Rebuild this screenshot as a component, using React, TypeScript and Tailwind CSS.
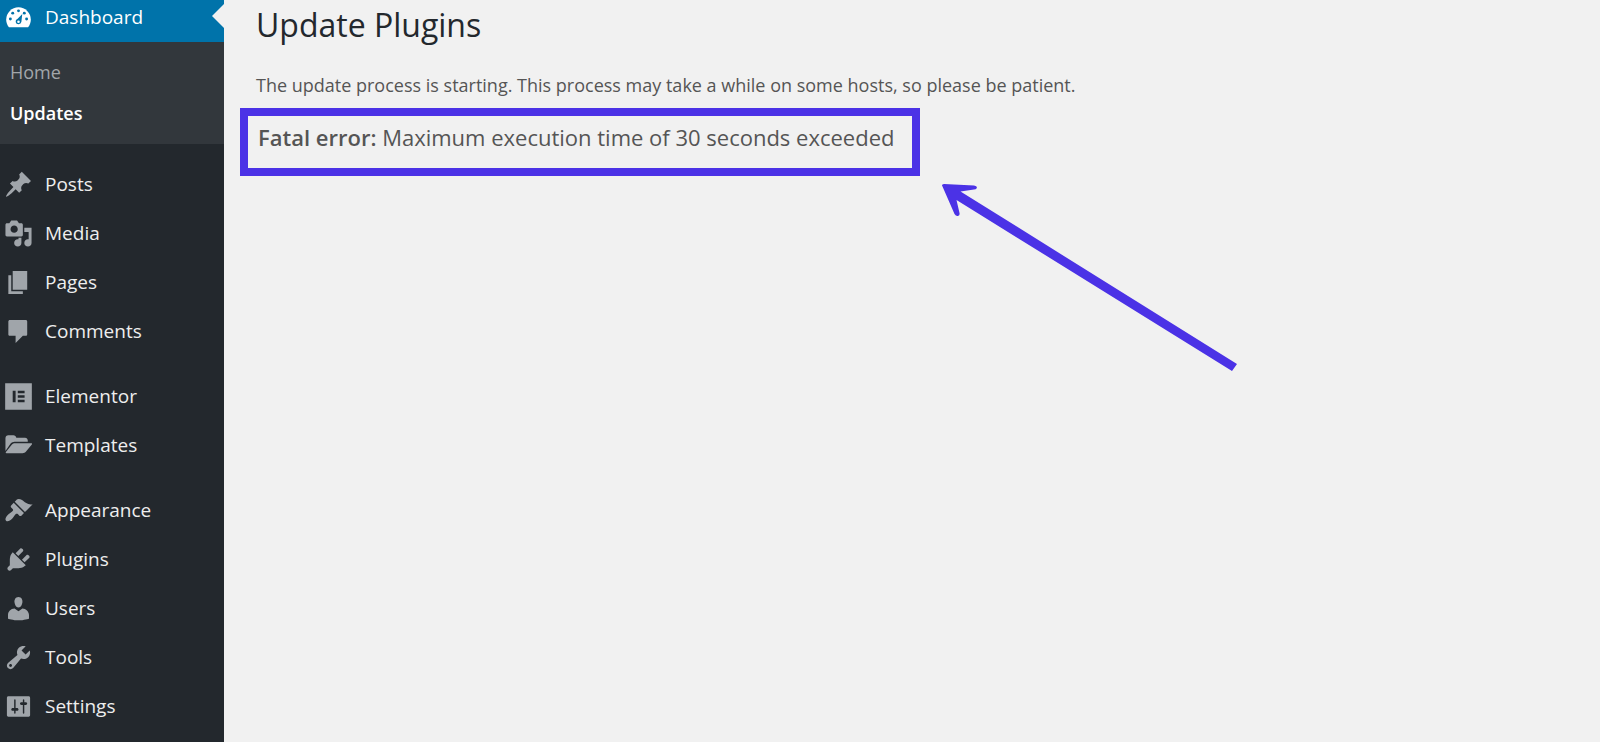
import type { ReactNode } from "react";

const Icon = ({ children }: { children: ReactNode }) => (
  <svg viewBox="0 0 20 20" className="size-[29px] flex-none" fill="currentColor" fillRule="evenodd" aria-hidden="true">
    {children}
  </svg>
);

const icons = {
  posts: (
    <path d="M10.44 3.02l1.82-1.82 6.36 6.35-1.83 1.82c-1.05-.68-2.48-.57-3.41.36l-.75.75c-.92.93-1.04 2.35-.35 3.41l-1.83 1.82-2.41-2.41-2.8 2.79c-.42.42-3.38 2.71-3.8 2.29s1.86-3.39 2.28-3.81l2.79-2.79L4.1 9.36l1.83-1.82c1.05.69 2.48.57 3.4-.36l.75-.75c.93-.92 1.05-2.35.36-3.41z" />
  ),
  media: (
    <path d="M13 11V4c0-.55-.45-1-1-1h-1.67L9 1H5L3.67 3H2c-.55 0-1 .45-1 1v7c0 .55.45 1 1 1h10c.55 0 1-.45 1-1zM7 4.5c1.38 0 2.5 1.12 2.5 2.5S8.38 9.5 7 9.5 4.5 8.38 4.5 7 5.62 4.5 7 4.5zM14 6h5v10.5c0 1.38-1.12 2.5-2.5 2.5S14 17.88 14 16.5s1.12-2.5 2.5-2.5c.17 0 .34.02.5.05V9h-3V6zm-4 8.05V13h2v3.5c0 1.38-1.12 2.5-2.5 2.5S7 17.88 7 16.5 8.12 14 9.5 14c.17 0 .34.02.5.05z" />
  ),
  pages: <path d="M6 15V2h10v13H6zm-1 1h8v2H3V5h2v11z" />,
  comments: (
    <path d="M4 2h11c.55 0 1 .45 1 1v9c0 .55-.45 1-1 1h-2l-5 5v-5H4c-.55 0-1-.45-1-1V3c0-.55.45-1 1-1z" />
  ),
  elementor: <path d="M.8.8h18.4v18.4H.8zM6 6v8h2V6zM9.5 6v1.7h4.7V6zM9.5 9.15v1.7h4.7v-1.7zM9.5 12.3V14h4.7v-1.7z" />,
  templates: (
    <path d="M1 13.8V5c0-1.2.8-2 2-2h3.5c1 0 1.8.7 2 1.7h6c1.1 0 1.9.8 1.9 1.9v.8H7.3c-1 0-2 .5-2.7 1.3L1 13.8zM7.4 8.5h11.4c.5 0 .7.4.4.8l-4 4.9c-.6.7-1.5 1.1-2.4 1.1H1.7c-.5 0-.7-.4-.4-.8L5.2 9.6c.6-.7 1.4-1.1 2.2-1.1z" />
  ),
  appearance: (
    <path d="M14.48 11.06L7.41 3.99l1.5-1.5c.5-.56 2.3-.47 3.51.32 1.21.8 1.43 1.28 2.91 2.1 1.18.64 2.45 1.26 4.45.85zm-.71.71L6.7 4.7 4.93 6.47c-.39.39-.39 1.02 0 1.41l1.06 1.06c.39.39.39 1.03 0 1.42-.6.6-1.43 1.11-2.21 1.69-.35.26-.7.53-1.01.84C1.43 14.23.4 16.08 1.4 17.07c.99 1 2.84-.03 4.18-1.36.31-.31.58-.66.85-1.02.57-.78 1.08-1.61 1.69-2.21.39-.39 1.02-.39 1.41 0l1.06 1.06c.39.39 1.02.39 1.41 0z" />
  ),
  plugins: (
    <path d="M13.11 4.36L9.87 7.6 8 5.73l3.24-3.24c.35-.34 1.05-.2 1.56.32.52.51.66 1.21.31 1.55zm-8 1.77l.91-1.12 9.01 9.01-1.19.84c-.71.71-2.63 1.16-3.82 1.16H6.14L4.9 17.26c-.59.59-1.54.59-2.12 0-.59-.58-.59-1.53 0-2.12l1.24-1.24v-3.88c0-1.13.4-3.19 1.09-3.89zm7.26 3.97l3.24-3.24c.34-.35 1.04-.21 1.55.31.52.51.66 1.21.31 1.55l-3.24 3.25z" />
  ),
  users: (
    <path d="M10 9.25c-2.27 0-2.73-3.44-2.73-3.44C7 4.02 7.82 2 9.97 2c2.16 0 2.98 2.02 2.71 3.81 0 0-.41 3.44-2.68 3.44zm0 2.57L12.72 10c2.39 0 4.52 2.33 4.52 4.53v2.49s-3.65 1.13-7.24 1.13c-3.65 0-7.24-1.13-7.24-1.13v-2.49c0-2.25 1.94-4.48 4.47-4.48z" />
  ),
  tools: (
    <path d="M16.68 9.77c-1.34 1.34-3.3 1.67-4.95.99l-5.41 6.52c-.99.99-2.59.99-3.58 0s-.99-2.59 0-3.57l6.52-5.42c-.68-1.65-.35-3.61.99-4.95 1.28-1.28 3.12-1.62 4.72-1.06l-2.89 2.89 2.82 2.82 2.86-2.87c.53 1.58.18 3.39-1.08 4.65zM3.81 16.21c.4.39 1.04.39 1.43 0 .4-.4.4-1.04 0-1.43-.39-.4-1.03-.4-1.43 0-.39.39-.39 1.03 0 1.43z" />
  ),
  settings: (
    <path d="M18 16V4c0-.55-.45-1-1-1H3c-.55 0-1 .45-1 1v12c0 .55.45 1 1 1h14c.55 0 1-.45 1-1zM8 11h1c.55 0 1 .45 1 1s-.45 1-1 1H8v1.5c0 .28-.22.5-.5.5s-.5-.22-.5-.5V13H6c-.55 0-1-.45-1-1s.45-1 1-1h1V5.5c0-.28.22-.5.5-.5s.5.22.5.5V11zm5-2h-1c-.55 0-1-.45-1-1s.45-1 1-1h1V5.5c0-.28.22-.5.5-.5s.5.22.5.5V7h1c.55 0 1 .45 1 1s-.45 1-1 1h-1v5.5c0 .28-.22.5-.5.5s-.5-.22-.5-.5V9z" />
  ),
};

const groups = [
  [
    { label: "Posts", icon: icons.posts },
    { label: "Media", icon: icons.media },
    { label: "Pages", icon: icons.pages },
    { label: "Comments", icon: icons.comments },
  ],
  [
    { label: "Elementor", icon: icons.elementor },
    { label: "Templates", icon: icons.templates },
  ],
  [
    { label: "Appearance", icon: icons.appearance },
    { label: "Plugins", icon: icons.plugins },
    { label: "Users", icon: icons.users },
    { label: "Tools", icon: icons.tools },
    { label: "Settings", icon: icons.settings },
  ],
];

const DashboardIcon = () => (
  <Icon>
    <path d="M3.4 16.7h13.2c1.1-1.4 1.9-3.2 1.9-5.2a8.5 8.5 0 0 0-17 0c0 2 .8 3.8 1.9 5.2z" />
    <g className="fill-[#0073aa]">
      <circle cx="10" cy="5.4" r="1" />
      <circle cx="6" cy="7" r="1" />
      <circle cx="14" cy="7" r="1" />
      <circle cx="4.4" cy="11" r="1" />
      <circle cx="15.6" cy="11" r="1" />
      <path d="M12.6 7.6l-.6 5.4a2 2 0 1 1-2.6-2.2zM10 12a.9.9 0 1 0 0 1.8.9.9 0 0 0 0-1.8z" />
    </g>
  </Icon>
);

const Sidebar = () => (
  <nav className="w-56 flex-none bg-[#23282d] text-[19px] text-[#eee]">
    <a href="#" className="relative flex h-[42px] items-center gap-3 bg-[#0073aa] pb-2 pl-1 text-white">
      <DashboardIcon />
      Dashboard
      <span className="absolute top-1 right-0 border-y-[12px] border-r-[12px] border-y-transparent border-r-[#f1f1f1]" />
    </a>
    <ul className="bg-[#32373c] py-[10px] pl-[10px] text-[18px] leading-[41px]">
      <li>
        <a href="#" className="text-[#a2a6aa]">
          Home
        </a>
      </li>
      <li>
        <a href="#" className="font-semibold text-white">
          Updates
        </a>
      </li>
    </ul>
    {groups.map((group) => (
      <ul key={group[0].label} className="pt-4">
        {group.map((item) => (
          <li key={item.label}>
            <a href="#" className="flex h-[49px] items-center gap-3 pl-1">
              <span className="text-[#a0a5aa]">
                <Icon>{item.icon}</Icon>
              </span>
              {item.label}
            </a>
          </li>
        ))}
      </ul>
    ))}
  </nav>
);

const Arrow = () => (
  <svg
    width="300"
    height="194"
    viewBox="0 0 300 194"
    className="absolute top-full left-full mt-3 ml-[26px] fill-[#4b32e6]"
    aria-hidden="true"
  >
    <path d="M4.5 6.5Q3 4.500 6 4L36 5.500Q40 6 38.500 8.500Q38 9.300 36 9.500L22.500 11.500L299 184L294 191L18.500 20L21.500 33Q22 35.500 20 36Q18 36.500 16.500 34z" />
  </svg>
);

const App = () => {
  return (
    <div className="flex min-h-screen overflow-hidden bg-[#f1f1f1] font-['Open_Sans','Noto_Sans',sans-serif]">
      <Sidebar />
      <main className="min-w-0 flex-1 pl-4 text-[#555]">
        <h1 className="pl-4 text-[32px] leading-[50px] text-[#23282d]">Update Plugins</h1>
        <p className="pt-5 pl-4 text-[18px] leading-[30px]">
          The update process is starting. This process may take a while on some hosts, so please be patient.
        </p>
        <div className="relative mt-2 h-[68px] w-[680px] border-8 border-[#4b32e6] pt-1 pl-[10px] text-[22px] leading-[34px]">
          <p>
            <span className="font-semibold">Fatal error:</span> Maximum execution time of 30 seconds exceeded
          </p>
          <Arrow />
        </div>
      </main>
    </div>
  );
};

export default App;
